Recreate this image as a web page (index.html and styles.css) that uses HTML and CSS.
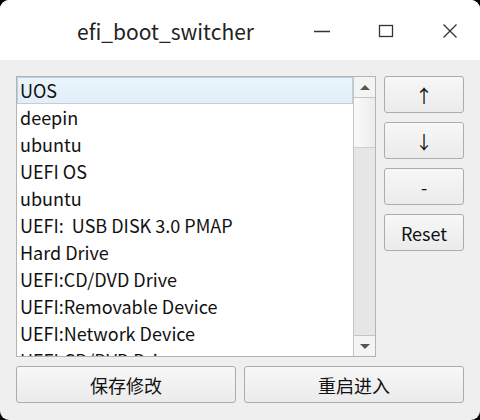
FILE: index.html
```html
<!DOCTYPE html>
<html>
<head>
<meta charset="utf-8">
<link rel="stylesheet" href="styles.css">
</head>
<body>
<div class="window">
  <div class="titlebar">
    <div class="title">efi_boot_switcher</div>
    <div class="controls">
      <svg class="ctl" width="20" height="20" viewBox="0 0 20 20"><path d="M2 10.5 H18" stroke="#333" stroke-width="1.3" fill="none"/></svg>
      <svg class="ctl" width="20" height="20" viewBox="0 0 20 20"><rect x="3.5" y="4.5" width="13" height="11" stroke="#333" stroke-width="1.3" fill="none"/></svg>
      <svg class="ctl" width="20" height="20" viewBox="0 0 20 20"><path d="M3.5 3.5 L16.5 16.5 M16.5 3.5 L3.5 16.5" stroke="#333" stroke-width="1.3" fill="none"/></svg>
    </div>
  </div>
  <div class="body">
    <div class="main">
      <div class="list">
        <div class="items">
          <div class="item selected">UOS</div>
          <div class="item">deepin</div>
          <div class="item">ubuntu</div>
          <div class="item">UEFI OS</div>
          <div class="item">ubuntu</div>
          <div class="item">UEFI:&nbsp; USB DISK 3.0 PMAP</div>
          <div class="item">Hard Drive</div>
          <div class="item">UEFI:CD/DVD Drive</div>
          <div class="item">UEFI:Removable Device</div>
          <div class="item">UEFI:Network Device</div>
          <div class="item">UEFI:CD/DVD Drive</div>
        </div>
        <div class="scrollbar">
          <div class="sb-btn"><span class="tri up"></span></div>
          <div class="sb-handle"></div>
          <div class="sb-track"></div>
          <div class="sb-btn bottom"><span class="tri down"></span></div>
        </div>
      </div>
      <div class="side">
        <button class="btn side-btn">↑</button>
        <button class="btn side-btn">↓</button>
        <button class="btn side-btn">-</button>
        <button class="btn side-btn">Reset</button>
      </div>
    </div>
    <div class="bottom-row">
      <button class="btn wide">保存修改</button>
      <button class="btn wide">重启进入</button>
    </div>
  </div>
</div>
</body>
</html>
```

FILE: styles.css
```css
html, body {
  margin: 0;
  padding: 0;
  background: #000;
}
body {
  width: 480px;
  height: 420px;
  overflow: hidden;
  font-family: "Noto Sans CJK SC", "Noto Sans", sans-serif;
}
.window {
  width: 480px;
  height: 420px;
  border-radius: 9px;
  overflow: hidden;
  background: #efefef;
  display: flex;
  flex-direction: column;
}
.titlebar {
  height: 60px;
  background: #fff;
  display: flex;
  align-items: center;
  position: relative;
}
.title {
  position: absolute;
  left: 77px;
  top: 16px;
  font-size: 21px;
  color: #222;
  line-height: 30px;
}
.controls {
  margin-left: auto;
  display: flex;
  gap: 44px;
  padding-right: 20px;
  padding-top: 1px;
}
.ctl { display: block; }
.body {
  flex: 1;
  padding: 16px 16px 0 16px;
  display: flex;
  flex-direction: column;
}
.main {
  display: flex;
  gap: 8px;
  height: 281px;
}
.list {
  width: 358px;
  border: 1px solid #b4b4b4;
  background: #fff;
  display: flex;
  overflow: hidden;
}
.items {
  flex: 1;
  overflow: hidden;
}
.item {
  height: 27px;
  line-height: 27px;
  padding-left: 3px;
  font-size: 18px;
  color: #111;
  white-space: nowrap;
  box-sizing: border-box;
}
.item.selected {
  background: linear-gradient(#e8f5fd, #e3eef8);
  border: 1px solid #bccfdd;
  padding-left: 2px;
  line-height: 25px;
}
.scrollbar {
  width: 21px;
  border-left: 1px solid #c4c4c4;
  display: flex;
  flex-direction: column;
  background: #e6e6e6;
}
.sb-btn {
  height: 20px;
  background: #f4f4f4;
  border-bottom: 1px solid #c4c4c4;
  display: flex;
  align-items: center;
  justify-content: center;
}
.sb-btn.bottom {
  border-bottom: none;
  border-top: 1px solid #c4c4c4;
}
.tri {
  width: 0;
  height: 0;
  border-left: 5px solid transparent;
  border-right: 5px solid transparent;
}
.tri.up { border-bottom: 5px solid #555; }
.tri.down { border-top: 5px solid #555; }
.sb-handle {
  height: 49px;
  background: linear-gradient(90deg, #fafafa, #ececec);
  border-bottom: 1px solid #cfcfcf;
}
.sb-track { flex: 1; }
.side {
  display: flex;
  flex-direction: column;
  gap: 9px;
  width: 80px;
}
.btn {
  font-family: "Noto Sans CJK SC", "Noto Sans", sans-serif;
  font-size: 18px;
  line-height: 24px;
  color: #111;
  background: linear-gradient(#f7f7f7, #ebebeb);
  border: 1px solid #acacac;
  border-radius: 3px;
  padding: 0;
  margin: 0;
  box-sizing: border-box;
}
.side-btn {
  height: 37px;
}
.bottom-row {
  display: flex;
  gap: 8px;
  margin-top: 9px;
}
.btn.wide {
  height: 37px;
  flex: 1;
}
```
